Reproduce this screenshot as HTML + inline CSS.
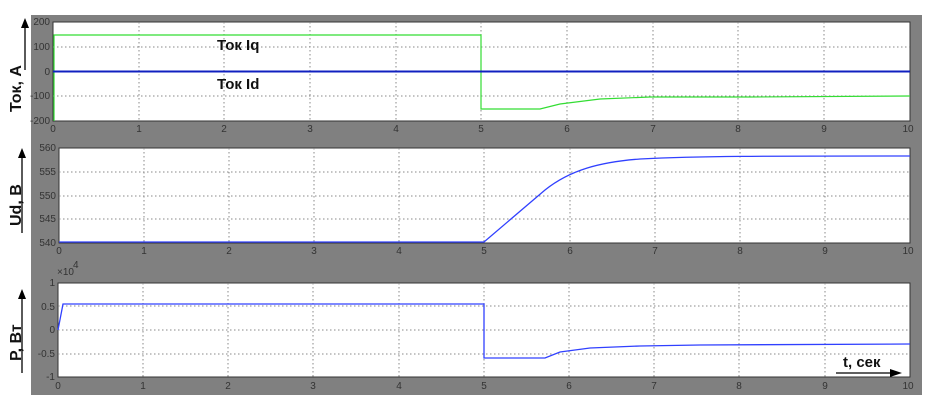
<!DOCTYPE html>
<html><head><meta charset="utf-8"><style>
body{margin:0;background:#fff;width:940px;height:410px;overflow:hidden}
svg{display:block;font-family:"Liberation Sans",sans-serif}
.t{font-size:10px;fill:#333}
.g{stroke:#888;stroke-width:1;stroke-dasharray:1.5,2.5}
.lab{font-size:15px;font-weight:bold;fill:#111}
</style></head><body>
<svg width="940" height="410" viewBox="0 0 940 410">
<rect x="31" y="15" width="891" height="380" fill="#808080"/>
<!-- plot 1 -->
<rect x="53" y="22" width="857" height="99" fill="#fff" stroke="#333"/>
<g class="g">
<line x1="139" y1="22" x2="139" y2="121"/><line x1="224" y1="22" x2="224" y2="121"/><line x1="310" y1="22" x2="310" y2="121"/><line x1="396" y1="22" x2="396" y2="121"/><line x1="481" y1="22" x2="481" y2="121"/><line x1="567" y1="22" x2="567" y2="121"/><line x1="653" y1="22" x2="653" y2="121"/><line x1="738" y1="22" x2="738" y2="121"/><line x1="824" y1="22" x2="824" y2="121"/>
<line x1="53" y1="47" x2="910" y2="47"/><line x1="53" y1="96" x2="910" y2="96"/>
</g>
<polyline points="54,121 54,35 481,35 481,109 540,109 560,104 600,99 650,97 750,97 910,96" fill="none" stroke="#33dd33" stroke-width="1.2"/>
<line x1="53" y1="71.5" x2="910" y2="71.5" stroke="#1020c0" stroke-width="2"/>
<text x="217" y="50" class="lab">Ток Iq</text>
<text x="217" y="89" class="lab">Ток Id</text>
<g class="t" text-anchor="end"><text x="50" y="25">200</text><text x="50" y="50">100</text><text x="50" y="75">0</text><text x="50" y="99">-100</text><text x="50" y="124">-200</text></g>
<g class="t" text-anchor="middle"><text x="53" y="132">0</text><text x="139" y="132">1</text><text x="224" y="132">2</text><text x="310" y="132">3</text><text x="396" y="132">4</text><text x="481" y="132">5</text><text x="567" y="132">6</text><text x="653" y="132">7</text><text x="738" y="132">8</text><text x="824" y="132">9</text><text x="908" y="132">10</text></g>
<!-- plot 2 -->
<rect x="59" y="148" width="851" height="95" fill="#fff" stroke="#333"/>
<g class="g">
<line x1="144" y1="148" x2="144" y2="243"/><line x1="229" y1="148" x2="229" y2="243"/><line x1="314" y1="148" x2="314" y2="243"/><line x1="399" y1="148" x2="399" y2="243"/><line x1="484" y1="148" x2="484" y2="243"/><line x1="570" y1="148" x2="570" y2="243"/><line x1="655" y1="148" x2="655" y2="243"/><line x1="740" y1="148" x2="740" y2="243"/><line x1="825" y1="148" x2="825" y2="243"/>
<line x1="59" y1="172" x2="910" y2="172"/><line x1="59" y1="196" x2="910" y2="196"/><line x1="59" y1="219" x2="910" y2="219"/>
</g>
<path d="M59,242 L484,242 L545,190 C570,170 600,162 640,159 C700,156 760,156 910,156" fill="none" stroke="#3040ff" stroke-width="1.3"/>
<g class="t" text-anchor="end"><text x="56" y="151">560</text><text x="56" y="175">555</text><text x="56" y="199">550</text><text x="56" y="222">545</text><text x="56" y="246">540</text></g>
<g class="t" text-anchor="middle"><text x="59" y="254">0</text><text x="144" y="254">1</text><text x="229" y="254">2</text><text x="314" y="254">3</text><text x="399" y="254">4</text><text x="484" y="254">5</text><text x="570" y="254">6</text><text x="655" y="254">7</text><text x="740" y="254">8</text><text x="825" y="254">9</text><text x="908" y="254">10</text></g>
<!-- plot 3 -->
<rect x="58" y="283" width="852" height="94" fill="#fff" stroke="#333"/>
<g class="g">
<line x1="143" y1="283" x2="143" y2="377"/><line x1="228" y1="283" x2="228" y2="377"/><line x1="313" y1="283" x2="313" y2="377"/><line x1="399" y1="283" x2="399" y2="377"/><line x1="484" y1="283" x2="484" y2="377"/><line x1="569" y1="283" x2="569" y2="377"/><line x1="654" y1="283" x2="654" y2="377"/><line x1="739" y1="283" x2="739" y2="377"/><line x1="825" y1="283" x2="825" y2="377"/>
<line x1="58" y1="306" x2="910" y2="306"/><line x1="58" y1="330" x2="910" y2="330"/><line x1="58" y1="354" x2="910" y2="354"/>
</g>
<polyline points="58,330 63,304 484,304 484,358 545,358 560,352 590,348 640,346 700,345 910,344" fill="none" stroke="#3040ff" stroke-width="1.3"/>
<g class="t" text-anchor="end"><text x="55" y="286">1</text><text x="55" y="310">0.5</text><text x="55" y="333">0</text><text x="55" y="357">-0.5</text><text x="55" y="380">-1</text></g>
<text x="57" y="275" class="t">×10</text><text x="73" y="268" class="t">4</text>
<g class="t" text-anchor="middle"><text x="58" y="389">0</text><text x="143" y="389">1</text><text x="228" y="389">2</text><text x="313" y="389">3</text><text x="399" y="389">4</text><text x="484" y="389">5</text><text x="569" y="389">6</text><text x="654" y="389">7</text><text x="739" y="389">8</text><text x="825" y="389">9</text><text x="908" y="389">10</text></g>
<text x="843" y="367" class="lab">t, сек</text>
<line x1="836" y1="373" x2="892" y2="373" stroke="#000" stroke-width="1.3"/>
<polygon points="902,373 890,369 890,377" fill="#000"/>
<!-- y labels -->
<g class="lab" style="font-size:16px">
<text transform="translate(21,112) rotate(-90)">Ток, А</text>
<text transform="translate(21,226) rotate(-90)">Ud, В</text>
<text transform="translate(21,361) rotate(-90)">P, Вт</text>
</g>
<g stroke="#000" stroke-width="1.3">
<line x1="25" y1="70" x2="25" y2="25"/><line x1="22" y1="233" x2="22" y2="155"/><line x1="22" y1="373" x2="22" y2="296"/>
</g>
<g fill="#000"><polygon points="25,18 21,28 29,28"/><polygon points="22,148 18,158 26,158"/><polygon points="22,289 18,299 26,299"/></g>
</svg>
</body></html>
